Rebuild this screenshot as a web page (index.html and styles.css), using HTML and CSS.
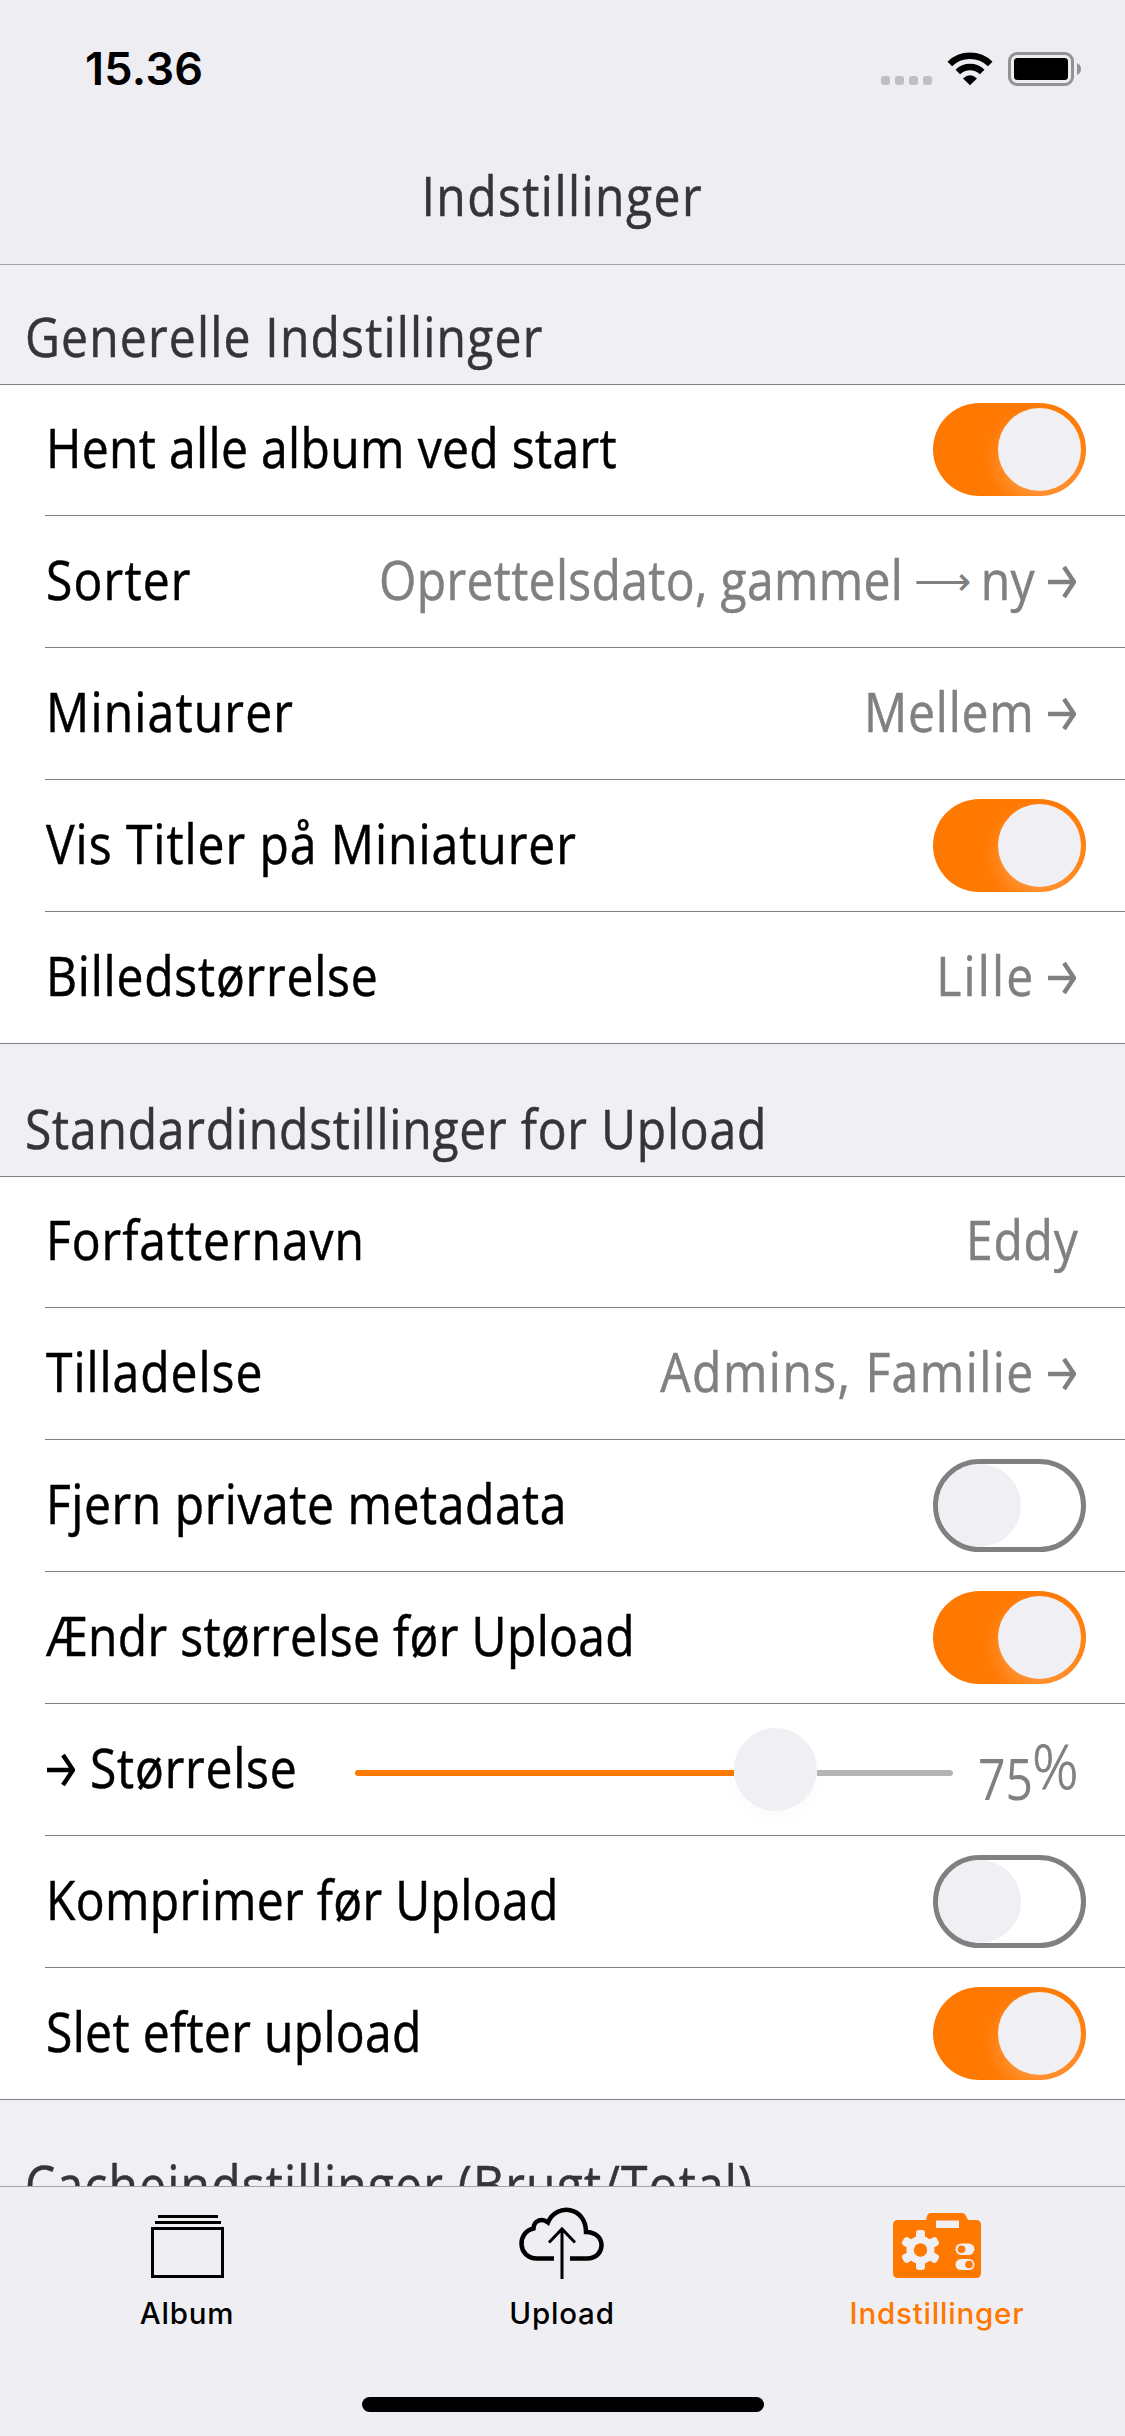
FILE: index.html
```html
<!DOCTYPE html>
<html lang="da">
<head>
<meta charset="utf-8">
<title>Indstillinger</title>
<link rel="stylesheet" href="styles.css">
</head>
<body>
<svg class="defs" width="0" height="0">
  <symbol id="arrow" viewBox="0 0 28 34"><path d="M0 17H26M16 2L26 17L16 32" fill="none" stroke="currentColor" stroke-width="4.400"/></symbol>
</svg>
<div class="screen">
  <header class="top">
    <div class="status">
      <span class="time">15.36</span>
      <div class="signals">
        <svg width="51" height="34" viewBox="0 0 51 34" fill="#bfbfc2"><rect x="0" y="24" width="9" height="9" rx="3"/><rect x="14" y="24" width="9" height="9" rx="3"/><rect x="28" y="24" width="9" height="9" rx="3"/><rect x="42" y="24" width="9" height="9" rx="3"/></svg>
        <svg class="wifi" width="46" height="34" viewBox="0 0 46 34"><g fill="none" stroke="#000" stroke-width="6.6"><path d="M2.8 12A29 29 0 0 1 43.2 12"/><path d="M10.8 20A17.5 17.5 0 0 1 35.2 20"/></g><path d="M16 26.5Q23 20 30 26.5L23 33.3Z"/></svg>
        <svg class="battery" width="74" height="34" viewBox="0 0 74 34"><rect x="1.5" y="1.5" width="63" height="31" rx="7.5" fill="none" stroke="#929295" stroke-width="3"/><rect x="6" y="6" width="54" height="22" rx="3.5"/><path d="M69 11Q73 13 73 17T69 23Z" fill="#929295"/></svg>
      </div>
    </div>
    <h1 class="title"><span class="t loose">Indstillinger</span></h1>
  </header>

  <main class="content">
    <h2 class="heading"><span class="t airy">Generelle Indstillinger</span></h2>
    <section class="group">
      <div class="row"><span class="t snug">Hent alle album ved start</span><i class="toggle on"></i></div>
      <div class="row"><span class="t airy">Sorter</span><div class="value"><span class="t snug">Oprettelsdato, gammel<span class="long">⟶</span>ny</span><svg class="arrow"><use href="#arrow"/></svg></div></div>
      <div class="row"><span class="t airy">Miniaturer</span><div class="value"><span class="t">Mellem</span><svg class="arrow"><use href="#arrow"/></svg></div></div>
      <div class="row"><span class="t even">Vis Titler på Miniaturer</span><i class="toggle on"></i></div>
      <div class="row"><span class="t">Billedstørrelse</span><div class="value"><span class="t wide">Lille</span><svg class="arrow"><use href="#arrow"/></svg></div></div>
    </section>

    <h2 class="heading"><span class="t">Standardindstillinger for Upload</span></h2>
    <section class="group">
      <div class="row"><span class="t even">Forfatternavn</span><div class="value"><span class="t">Eddy</span></div></div>
      <div class="row"><span class="t even">Tilladelse</span><div class="value"><span class="t loose">Admins, Familie</span><svg class="arrow"><use href="#arrow"/></svg></div></div>
      <div class="row"><span class="t close">Fjern private metadata</span><i class="toggle"></i></div>
      <div class="row"><span class="t snug">Ændr størrelse før Upload</span><i class="toggle on"></i></div>
      <div class="row size-row"><svg class="arrow"><use href="#arrow"/></svg><span class="t">Størrelse</span><div class="slider"><i class="fill"></i><i class="knob"></i><i class="rest"></i></div><div class="percent"><span class="num">75</span><span class="sign">%</span></div></div>
      <div class="row"><span class="t snug">Komprimer før Upload</span><i class="toggle"></i></div>
      <div class="row"><span class="t snug">Slet efter upload</span><i class="toggle on"></i></div>
    </section>

    <h2 class="heading"><span class="t airy">Cacheindstillinger (Brugt/Total)</span></h2>
  </main>

  <footer class="bottom">
    <nav class="tabs">
      <a class="tab">
        <svg width="88" height="74" viewBox="0 0 88 74" fill="none" stroke="#000" stroke-width="3"><path d="M15 10.500H75M12 16.500H78"/><rect x="9.500" y="22.500" width="70" height="48"/></svg>
        <span>Album</span>
      </a>
      <a class="tab">
        <svg width="88" height="74" viewBox="0 0 88 74" fill="none" stroke="#000"><path d="M36 52.500H19C-1 52 -1 26 15.500 22.500C16 14 24 12 30 16.500C38 -3 68 0 68 26C89 26 88 52.500 69 52.500H52" stroke-width="4.500"/><path d="M44 73V23M31 36.500L44 23L57 36.500" stroke-width="3"/></svg>
        <span>Upload</span>
      </a>
      <a class="tab active">
        <svg width="88" height="74" viewBox="0 0 88 74"><path fill="#ff7800" d="M5 14H33L34 10Q35 7 38 7H69Q72 7 73 10L75 14H83Q88 14 88 19V67Q88 72 83 72H5Q0 72 0 67V19Q0 14 5 14Z"/><g fill="#efeff4"><rect x="43" y="14.500" width="23" height="7.500"/><circle cx="27.500" cy="44" r="14"/><g><rect id="tooth" x="23" y="24" width="9" height="40" rx="3"/><use href="#tooth" transform="rotate(60 27.500 44)"/><use href="#tooth" transform="rotate(120 27.500 44)"/></g><rect x="62.500" y="37.500" width="19" height="11.500" rx="5.750"/><rect x="62.500" y="53" width="19" height="11" rx="5.500"/></g><g fill="#ff7800"><circle cx="27.500" cy="44" r="6.700"/><circle cx="68.500" cy="43.300" r="3.800"/><circle cx="76" cy="58.500" r="3.800"/></g></svg>
        <span>Indstillinger</span>
      </a>
    </nav>
    <div class="home"></div>
  </footer>
</div>
</body>
</html>
```
FILE: styles.css
```css
* { box-sizing: border-box; }
body { margin: 0; background: #efeff4; font-family: "Open Sans", "Noto Sans", sans-serif; color: #000; }
.defs { display: block; }
.screen { width: 1125px; height: 2436px; display: flex; flex-direction: column; overflow: hidden; }

/* Status bar and title */
.top { flex: none; height: 265px; border-bottom: 1px solid #a4a4a8; background: #eeeef2; }
.status { height: 132px; padding: 0 43px 0 85px; display: flex; justify-content: space-between; align-items: flex-start; }
.time { font: 600 45px/54px Inter, sans-serif; letter-spacing: .3px; margin-top: 42px; }
.signals { display: flex; margin-top: 52px; }
.wifi { margin-left: 15px; }
.battery { margin-left: 15px; }
.title { margin: 0; height: 132px; padding-bottom: 6px; display: flex; justify-content: center; align-items: center; color: #353538; font-weight: 400; }

/* Condensed label text */
.t { font-size: 54px; line-height: 74px; font-weight: 430; letter-spacing: .85px; white-space: nowrap; transform: scaleX(.89); transform-origin: left; -webkit-text-stroke: .5px currentColor; }
.title .t { transform-origin: center; }
.snug { letter-spacing: .35px; }
.close { letter-spacing: .6px; }
.even { letter-spacing: 1.05px; }
.airy { letter-spacing: 1.3px; }
.loose { letter-spacing: 1.6px; }
.wide { letter-spacing: 2.4px; }

/* Settings list */
.content { flex: 1; min-height: 0; overflow: hidden; }
.heading { margin: 0; height: 132px; padding: 0 0 11px 25px; display: flex; align-items: flex-end; color: #353538; font-weight: 400; }
.heading:first-child { height: 119px; }
.group { background: #fff; border-top: 1px solid #808080; border-bottom: 1px solid #808080; }
.row { height: 132px; margin-left: 45px; padding: 0 39px 0 1px; display: flex; align-items: center; justify-content: space-between; border-top: 1px solid #808080; }
.row:first-child { height: 130px; border-top: 0; }
.row:first-child .toggle { margin-bottom: 2px; }
.row .t { padding-bottom: 6px; }
.value { display: flex; align-items: center; color: #808080; padding-right: 7px; }
.value .t { transform-origin: right; }
.value .arrow { margin: 0 3px 0 13px; }
.arrow { width: 28px; height: 34px; flex: none; }
.long { display: inline-block; font: 200 42px/40px "DejaVu Sans", sans-serif; margin: 0 13px 0 14px; letter-spacing: 0; transform: translateY(-5px) scaleX(1.07); -webkit-text-stroke: 0; }

.toggle { width: 153px; height: 93px; border-radius: 47px; border: 5px solid #808080; background: #fff; display: flex; align-items: center; overflow: hidden; }
.toggle::before { content: ""; width: 83px; height: 83px; border-radius: 50%; background: #efeff4; box-shadow: 0 9px 20px rgba(255,255,255,.25); flex: none; }
.toggle.on { justify-content: flex-end; border: 0; padding-right: 5px; background: #ff7800; }

.size-row { justify-content: flex-start; }
.size-row .arrow { margin-left: 1px; }
.size-row .t { margin-left: 15px; width: 265px; }
.slider { display: flex; align-items: center; width: 598px; margin-top: 6px; }
.fill { height: 6px; width: 379px; border-radius: 3px 0 0 3px; background: #ff7800; }
.knob { width: 83px; height: 83px; margin-bottom: 6px; border-radius: 50%; background: #efeff4; box-shadow: 0 8px 16px rgba(0,0,0,.02); }
.rest { height: 6px; flex: 1; border-radius: 0 3px 3px 0; background: #b4b4b4; }
.percent { display: flex; align-items: center; width: 100px; margin-left: 25px; font-size: 56px; line-height: 74px; color: #808080; }
.num { padding-top: 16px; font-weight: 400; width: 54px; transform: scaleX(.86); transform-origin: left; }
.sign { padding-bottom: 7px; font-size: 60px; font-weight: 300; transform: scaleX(.96); transform-origin: left; -webkit-text-stroke: .8px currentColor; }

/* Tab bar */
.bottom { flex: none; height: 250px; border-top: 1px solid #a4a4a8; background: #efeff3; display: flex; flex-direction: column; align-items: center; justify-content: space-between; padding-bottom: 24px; }
.tabs { display: flex; justify-content: space-between; width: 1125px; padding: 19px 1px 0 0; }
.tab { width: 374px; display: flex; flex-direction: column; align-items: center; font: 480 29.500px/36px Inter, sans-serif; letter-spacing: .8px; }
.tab span { margin-top: 15px; }
.active { color: #ff7800; }
.home { width: 402px; height: 15px; border-radius: 8px; background: #000; }
```
